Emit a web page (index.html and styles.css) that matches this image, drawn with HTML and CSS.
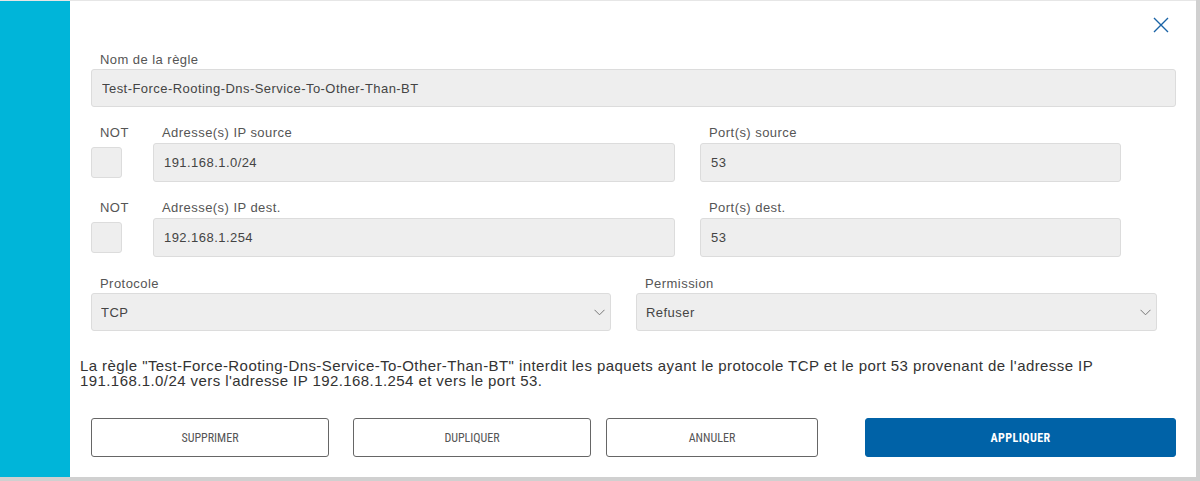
FILE: index.html
```html
<!DOCTYPE html>
<html lang="fr">
<head>
<meta charset="utf-8">
<title>Règle de pare-feu</title>
<link rel="stylesheet" href="styles.css">
</head>
<body>
<div class="modal">
  <div class="side"></div>
  <div class="content">
    <div class="header">
      <button class="close" aria-label="Fermer">
        <svg width="16" height="16" viewBox="0 0 16 16"><path d="M1 1 L15 15 M15 1 L1 15" stroke="#1a63a6" stroke-width="1.4" fill="none"/></svg>
      </button>
    </div>
    <div class="form">
      <div class="field">
        <label class="label">Nom de la règle</label>
        <input class="input h38" type="text" value="Test-Force-Rooting-Dns-Service-To-Other-Than-BT" readonly>
      </div>

      <div class="row row-ip">
        <div class="col-not">
          <label class="label">NOT</label>
          <div class="box-wrap"><input class="check" type="checkbox"></div>
        </div>
        <div class="col-ip">
          <label class="label">Adresse(s) IP source</label>
          <input class="input h39" type="text" value="191.168.1.0/24" readonly>
        </div>
        <div class="col-port">
          <label class="label">Port(s) source</label>
          <input class="input h39" type="text" value="53" readonly>
        </div>
      </div>

      <div class="row row-ip">
        <div class="col-not">
          <label class="label">NOT</label>
          <div class="box-wrap"><input class="check" type="checkbox"></div>
        </div>
        <div class="col-ip">
          <label class="label">Adresse(s) IP dest.</label>
          <input class="input h39" type="text" value="192.168.1.254" readonly>
        </div>
        <div class="col-port">
          <label class="label">Port(s) dest.</label>
          <input class="input h39" type="text" value="53" readonly>
        </div>
      </div>

      <div class="row row-sel">
        <div class="col-proto">
          <label class="label">Protocole</label>
          <div class="select-wrap">
            <select class="select"><option>TCP</option></select>
            <svg class="chev" width="11" height="7" viewBox="0 0 11 7"><path d="M0.5 0.8 L5.5 5.8 L10.5 0.8" stroke="#777" stroke-width="1" fill="none"/></svg>
          </div>
        </div>
        <div class="col-perm">
          <label class="label">Permission</label>
          <div class="select-wrap">
            <select class="select"><option>Refuser</option></select>
            <svg class="chev" width="11" height="7" viewBox="0 0 11 7"><path d="M0.5 0.8 L5.5 5.8 L10.5 0.8" stroke="#777" stroke-width="1" fill="none"/></svg>
          </div>
        </div>
      </div>
    </div>

    <p class="desc">La règle "Test-Force-Rooting-Dns-Service-To-Other-Than-BT" interdit les paquets ayant le protocole TCP et le port 53 provenant de l'adresse IP 191.168.1.0/24 vers l'adresse IP 192.168.1.254 et vers le port 53.</p>

    <div class="actions">
      <button class="btn btn-del">SUPPRIMER</button>
      <button class="btn btn-dup">DUPLIQUER</button>
      <button class="btn btn-cancel">ANNULER</button>
      <button class="btn btn-apply">APPLIQUER</button>
    </div>
  </div>
</div>
</body>
</html>
```

FILE: styles.css
```css
* { box-sizing: border-box; }

html, body {
  margin: 0;
  padding: 0;
}

body {
  background: #d0d0d0;
  width: 1200px;
  height: 481px;
  font-family: "Liberation Sans", Arial, sans-serif;
  overflow: hidden;
}

.modal {
  width: 1196px;
  height: 477px;
  display: flex;
  background: #ffffff;
  border-top: 1px solid #e6e6e6;
}

.side {
  width: 70px;
  flex: none;
  background: #00b5d9;
}

.content {
  flex: 1;
  padding: 0 20px 0 10px;
}

.header {
  height: 51px;
  display: flex;
  justify-content: flex-end;
  padding: 16px 7px 0 0;
}

.close {
  border: 0;
  background: none;
  padding: 0;
  width: 16px;
  height: 16px;
  cursor: pointer;
}
.close svg { display: block; }

.form {
  margin-left: 11px;
}

.label {
  display: block;
  font-size: 13px;
  letter-spacing: 0.45px;
  line-height: 16px;
  color: #555;
  padding-left: 9px;
  margin-bottom: 1px;
}

.input {
  display: block;
  width: 100%;
  background: #eeeeee;
  border: 1px solid #dcdcdc;
  border-radius: 3px;
  padding: 0 0 0 10px;
  font-family: "Liberation Sans", Arial, sans-serif;
  font-size: 13px;
  letter-spacing: 0.45px;
  color: #444;
  outline: none;
}
.h38 { height: 38px; }
.h39 { height: 39px; }

.row {
  display: flex;
}
.row-ip { margin-top: 18px; }
.row-ip .label { margin-bottom: 2px; }
.row-sel { margin-top: 19px; }

.col-not { width: 31px; flex: none; }
.col-ip { width: 522px; flex: none; margin-left: 31px; }
.col-port { width: 421px; flex: none; margin-left: 25px; }

.box-wrap {
  height: 39px;
  display: flex;
  align-items: center;
}

.check {
  appearance: none;
  -webkit-appearance: none;
  margin: 0;
  width: 31px;
  height: 31px;
  background: #eeeeee;
  border: 1px solid #dcdcdc;
  border-radius: 3px;
}

.col-proto { width: 520px; flex: none; }
.col-perm { width: 521px; flex: none; margin-left: 25px; }

.select-wrap {
  position: relative;
}

.select {
  appearance: none;
  -webkit-appearance: none;
  display: block;
  width: 100%;
  height: 38px;
  background: #eeeeee;
  border: 1px solid #dcdcdc;
  border-radius: 3px;
  padding: 0 0 0 9px;
  font-family: "Liberation Sans", Arial, sans-serif;
  font-size: 13px;
  letter-spacing: 0.45px;
  color: #444;
  outline: none;
}

.chev {
  position: absolute;
  right: 6px;
  top: 16px;
  pointer-events: none;
}

.desc {
  margin: 27px 0 0 0;
  font-size: 15px;
  letter-spacing: 0.42px;
  line-height: 15px;
  color: #333;
}

.actions {
  display: flex;
  margin: 30px 0 0 11px;
}

.btn {
  height: 39px;
  border: 1px solid #666;
  border-radius: 3px;
  background: #fff;
  color: #555;
  font-family: "Liberation Sans Narrow", "Arial Narrow", "Roboto", sans-serif;
  font-stretch: condensed;
  font-size: 12px;
  padding: 0;
  cursor: pointer;
}

.btn-del { width: 238px; }
.btn-dup { width: 238px; margin-left: 24px; }
.btn-cancel { width: 212px; margin-left: 15px; }
.btn-apply {
  width: 311px;
  margin-left: 47px;
  background: #0062a7;
  border-color: #0062a7;
  color: #fff;
  font-weight: bold;
  letter-spacing: 0.4px;
}
```
